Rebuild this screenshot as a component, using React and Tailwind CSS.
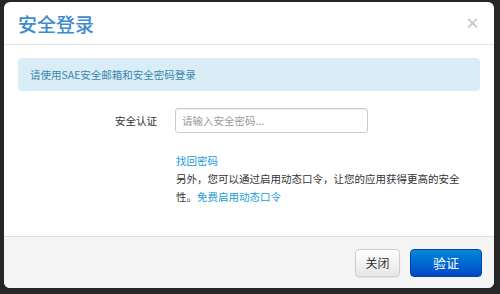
export default function App() {
  const font = { fontFamily: '"Noto Sans CJK SC", "Noto Sans", sans-serif' };
  return (
    <div className="w-[500px] h-[294px] bg-[#262626] pt-[2px] pl-[4px] overflow-hidden" style={font}>
      <div className="w-[490px] h-[286px] bg-white rounded-[6px] flex flex-col overflow-hidden">
        <div className="h-[43px] border-b border-[#e5e5e5] flex items-center justify-between pl-[14px] pr-[14px] shrink-0">
          <span className="text-[19px] leading-none text-[#3f8ccc] font-medium">安全登录</span>
          <span className="text-[15px] leading-none font-bold text-[#c4c4c4] -mt-[2px]">×</span>
        </div>
        <div className="flex-1 px-[14px] pt-[13px]">
          <div className="h-[33px] bg-[#d9edf7] rounded-[4px] flex items-center px-[12px] text-[10.5px] text-[#3a87ad]">
            请使用SAE安全邮箱和安全密码登录
          </div>
          <div className="flex items-center mt-[17px]">
            <div className="w-[139px] text-right text-[10.5px] text-[#333]">安全认证</div>
            <div className="ml-[18px] w-[193px] h-[25px] border border-[#cccccc] rounded-[3px] flex items-center px-[6px] text-[10.5px] text-[#9a9a9a] shadow-[inset_0_1px_1px_rgba(0,0,0,0.075)]">
              请输入安全密码...
            </div>
          </div>
          <div className="ml-[158px] mt-[19px] w-[286px] text-[10.5px] leading-[18px] text-[#333]">
            <div className="text-[#1a9bd7]">找回密码</div>
            <p>
              另外，您可以通过启用动态口令，让您的应用获得更高的安全性。<span className="text-[#1a9bd7]">免费启用动态口令</span>
            </p>
          </div>
        </div>
        <div className="h-[52px] shrink-0 bg-[#f5f5f5] border-t border-[#e0e0e0] flex items-center justify-end gap-[10px] pr-[12px]">
          <div className="w-[45px] h-[28px] rounded-[4px] border border-[#cfcfcf] bg-gradient-to-b from-white to-[#e6e6e6] flex items-center justify-center text-[12px] text-[#333] shadow-[0_1px_2px_rgba(0,0,0,0.08)]">
            关闭
          </div>
          <div className="w-[72px] h-[28px] rounded-[4px] border border-[#0044aa] bg-gradient-to-b from-[#0a88d6] to-[#0046c8] flex items-center justify-center text-[13px] text-white">
            验证
          </div>
        </div>
      </div>
    </div>
  );
}
